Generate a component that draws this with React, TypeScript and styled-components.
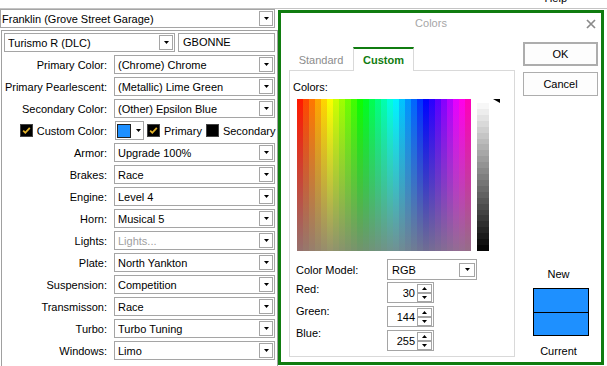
import React from 'react'
import styled, { createGlobalStyle } from 'styled-components'

const GREEN = '#107c10'
const EDGE = '#a5a5a5'

// banded spectrum like the win32 colour picker
const hueStops = Array.from({ length: 29 }, (_, i) => {
    const h = Math.round((i * 6 + 3) * 1.85)
    return `hsl(${h} 100% 50%) ${i * 6}px ${i * 6 + 6}px`
}).join(', ')

const lumStops = Array.from({ length: 25 }, (_, i) => {
    const v = Math.round(247 - i * 10)
    return `rgb(${v},${v},${v}) ${((i * 100) / 25).toFixed(2)}% ${(((i + 1) * 100) / 25).toFixed(2)}%`
}).join(', ')

const GlobalStyle = createGlobalStyle`
    html, body {
        margin: 0;
        padding: 0;
        background: #fff;
    }
    body {
        font-family: 'Liberation Sans', Arial, sans-serif;
        font-size: 11px;
        color: #000;
    }
`

const Screen = styled.div`
    width: 607px;
    height: 366px;
    overflow: hidden;
    background: #fff;
`

const MenuBar = styled.div`
    height: 8px;
    border-bottom: 1px solid #c4c4c4;
    display: flex;
    justify-content: flex-end;
    align-items: flex-end;
    overflow: hidden;
    padding-right: 40px;
`
const MenuItem = styled.span`
    line-height: 13px;
    margin-bottom: 3px;
`

const Workspace = styled.div`
    display: flex;
    align-items: flex-start;
`

const EditorColumn = styled.div`
    width: 278px;
    flex-shrink: 0;
`

const ComboBox = styled.div<{ $w: number; $h?: number; $pad?: number }>`
    display: flex;
    align-items: center;
    box-sizing: border-box;
    width: ${(p) => p.$w}px;
    height: ${(p) => p.$h ?? 19}px;
    border: 1px solid ${EDGE};
    background: #fff;
    padding-left: ${(p) => p.$pad ?? 3}px;
`
const ComboText = styled.span<{ $muted?: boolean }>`
    flex: 1;
    white-space: nowrap;
    overflow: hidden;
    color: ${(p) => (p.$muted ? '#a0a0a0' : '#000')};
`
const DropButton = styled.span<{ $w?: number; $h?: number }>`
    display: flex;
    align-items: center;
    justify-content: center;
    box-sizing: border-box;
    width: ${(p) => p.$w ?? 14}px;
    height: ${(p) => p.$h ?? 15}px;
    margin-right: 1px;
    border: 1px solid ${EDGE};
    background: #fff;
`

const GroupPanel = styled.div`
    margin: 2px 0 0 1px;
    width: 277px;
    height: 345px;
    box-sizing: border-box;
    border: 1px solid #a0a0a0;
    padding: 2px 0 0 2px;
`
const TopRow = styled.div`
    display: flex;
    gap: 3px;
`
const TextBox = styled.div`
    box-sizing: border-box;
    width: 97px;
    height: 19px;
    border: 1px solid ${EDGE};
    padding-left: 4px;
    line-height: 17px;
`
const FieldRow = styled.div`
    display: flex;
    align-items: center;
    height: 19px;
    margin-top: 3px;
`
const FieldLabel = styled.div`
    display: flex;
    justify-content: flex-end;
    align-items: center;
    gap: 4px;
    width: 103px;
    margin-right: 7px;
    white-space: nowrap;
`
const CheckSquare = styled.span`
    display: inline-flex;
    box-sizing: border-box;
    width: 13px;
    height: 13px;
    background: #000;
    border: 1px solid #444;
    flex-shrink: 0;
`
const ColorCombo = styled.div`
    display: flex;
    align-items: center;
    box-sizing: border-box;
    width: 29px;
    height: 19px;
    margin-left: 1px;
    border: 1px solid ${EDGE};
    padding-left: 1px;
    gap: 5px;
`
const ColorChip = styled.span<{ $color: string }>`
    box-sizing: border-box;
    width: 14px;
    height: 14px;
    border: 1px solid #222;
    background: ${(p) => p.$color};
`
const InlineOption = styled.label<{ $gap: number }>`
    display: flex;
    align-items: center;
    gap: 4px;
    margin-left: ${(p) => p.$gap}px;
    white-space: nowrap;
`

const Dialog = styled.div`
    margin-top: 1px;
    width: 326px;
    height: 355px;
    box-sizing: border-box;
    border: 3px solid ${GREEN};
    background: #fff;
    display: flex;
    flex-direction: column;
    flex-shrink: 0;
`
const TitleBar = styled.div`
    height: 29px;
    box-sizing: border-box;
    padding-top: 3px;
    display: flex;
    align-items: flex-start;
`
const Title = styled.div`
    flex: 1;
    text-align: center;
    line-height: 15px;
    color: #a6a6a6;
`
const CloseButton = styled.div`
    width: 20px;
    height: 15px;
    display: flex;
    align-items: center;
    justify-content: center;
`
const DialogBody = styled.div`
    display: flex;
    gap: 8px;
    padding: 0 3px 0 8px;
`
const TabColumn = styled.div`
    width: 226px;
    margin-top: 5px;
    display: flex;
    flex-direction: column;
`
const TabStrip = styled.div`
    display: flex;
    align-items: flex-end;
    height: 23px;
`
const Tab = styled.div<{ $active?: boolean }>`
    box-sizing: border-box;
    display: flex;
    align-items: center;
    justify-content: center;
    width: ${(p) => (p.$active ? 61 : 64)}px;
    height: ${(p) => (p.$active ? 24 : 23)}px;
    margin-bottom: ${(p) => (p.$active ? -1 : 0)}px;
    position: relative;
    z-index: ${(p) => (p.$active ? 1 : 0)};
    background: #fff;
    color: ${(p) => (p.$active ? GREEN : '#8c8c8c')};
    font-weight: ${(p) => (p.$active ? 'bold' : 'normal')};
    border: ${(p) => (p.$active ? '1px solid #d9d9d9' : 'none')};
    border-top: ${(p) => (p.$active ? `2px solid ${GREEN}` : 'none')};
    border-bottom: none;
    padding-top: ${(p) => (p.$active ? 0 : 3)}px;
`
const TabPanel = styled.div`
    box-sizing: border-box;
    height: 287px;
    border: 1px solid #d9d9d9;
    display: flex;
    flex-direction: column;
`
const PanelLabel = styled.div`
    margin: 9px 0 0 3px;
    line-height: 15px;
`
const PickerRow = styled.div`
    display: flex;
    align-items: flex-start;
    margin-top: 4px;
    padding-left: 7px;
`
const Spectrum = styled.div`
    width: 174px;
    height: 152px;
    background: linear-gradient(
            to bottom,
            rgba(128, 128, 128, 0) 0%,
            rgba(128, 128, 128, 0.45) 55%,
            rgba(132, 128, 128, 0.85) 100%
        ),
        linear-gradient(to right, ${hueStops});
`
const LumBar = styled.div`
    width: 12px;
    height: 148px;
    margin: 4px 0 0 6px;
    background: linear-gradient(to bottom, ${lumStops});
`
const LumArrow = styled.svg`
    margin-left: 4px;
`
const ModelRow = styled.div`
    display: flex;
    align-items: center;
    margin-top: 8px;
`
const RowLabel = styled.div`
    width: 97px;
    box-sizing: border-box;
    padding-left: 6px;
`
const SpinArea = styled.div`
    display: flex;
    align-items: flex-start;
    margin-top: 2px;
`
const SpinLabels = styled.div`
    width: 97px;
    box-sizing: border-box;
    padding-left: 6px;
    margin-top: -4px;
    display: flex;
    flex-direction: column;
`
const SpinLabel = styled.div`
    line-height: 22px;
`
const SpinColumn = styled.div`
    display: flex;
    flex-direction: column;
    gap: 3px;
`
const SpinBox = styled.div`
    box-sizing: border-box;
    width: 47px;
    height: 21px;
    border: 1px solid ${EDGE};
    display: flex;
    align-items: center;
`
const SpinValue = styled.span`
    flex: 1;
    text-align: right;
    padding-right: 2px;
`
const SpinButtons = styled.div`
    display: flex;
    flex-direction: column;
    width: 15px;
    margin-right: 1px;
`
const SpinButton = styled.span`
    box-sizing: border-box;
    height: 9px;
    border: 1px solid ${EDGE};
    display: flex;
    align-items: center;
    justify-content: center;
`
const ButtonColumn = styled.div`
    width: 75px;
    display: flex;
    flex-direction: column;
`
const DialogButton = styled.div<{ $default?: boolean }>`
    box-sizing: border-box;
    height: 24px;
    margin-top: ${(p) => (p.$default ? 0 : 6)}px;
    border: ${(p) => (p.$default ? 2 : 1)}px solid #adadad;
    background: #fdfdfd;
    display: flex;
    align-items: center;
    justify-content: center;
`
const PreviewLabel = styled.div<{ $top: number }>`
    margin-top: ${(p) => p.$top}px;
    line-height: 15px;
    text-align: center;
    padding-right: 4px;
`
const Swatch = styled.div`
    box-sizing: border-box;
    width: 56px;
    height: 48px;
    margin: 6px 0 0 10px;
    border: 1px solid #000;
    display: flex;
    flex-direction: column;
`
const SwatchHalf = styled.div<{ $color: string; $split?: boolean }>`
    flex: 1;
    background: ${(p) => p.$color};
    border-top: ${(p) => (p.$split ? '1px solid #000' : 'none')};
`

const Arrow = ({ up }: { up?: boolean }) => (
    <svg width="5" height="3" viewBox="0 0 5 3">
        <path d={up ? 'M0 3h5L2.5 0z' : 'M0 0h5L2.5 3z'} fill="#000" />
    </svg>
)

const Check = ({ checked }: { checked?: boolean }) => (
    <CheckSquare>
        {checked && (
            <svg width="11" height="11" viewBox="0 0 11 11">
                <polyline
                    points="2.2,5.6 4.3,7.8 8.8,2.8"
                    fill="none"
                    stroke="#e3b32a"
                    strokeWidth="1.8"
                />
            </svg>
        )}
    </CheckSquare>
)

const Combo = ({ text, w, muted }: { text: string; w: number; muted?: boolean }) => (
    <ComboBox $w={w}>
        <ComboText $muted={muted}>{text}</ComboText>
        <DropButton>
            <Arrow />
        </DropButton>
    </ComboBox>
)

const fields: [string, string, boolean?][] = [
    ['Armor:', 'Upgrade 100%'],
    ['Brakes:', 'Race'],
    ['Engine:', 'Level 4'],
    ['Horn:', 'Musical 5'],
    ['Lights:', 'Lights...', true],
    ['Plate:', 'North Yankton'],
    ['Suspension:', 'Competition'],
    ['Transmisson:', 'Race'],
    ['Turbo:', 'Turbo Tuning'],
    ['Windows:', 'Limo'],
]

const spins: [string, number][] = [
    ['Red:', 30],
    ['Green:', 144],
    ['Blue:', 255],
]

export default function App() {
    const custom = 'rgb(30, 144, 255)'
    return (
        <Screen>
            <GlobalStyle />
            <MenuBar>
                <MenuItem>Help</MenuItem>
            </MenuBar>
            <Workspace>
                <EditorColumn>
                    <ComboBox $w={275} $pad={1}>
                        <ComboText>Franklin (Grove Street Garage)</ComboText>
                        <DropButton>
                            <Arrow />
                        </DropButton>
                    </ComboBox>
                    <GroupPanel>
                        <TopRow>
                            <Combo text="Turismo R (DLC)" w={171} />
                            <TextBox>GBONNE</TextBox>
                        </TopRow>
                        <FieldRow>
                            <FieldLabel>Primary Color:</FieldLabel>
                            <Combo text="(Chrome) Chrome" w={161} />
                        </FieldRow>
                        <FieldRow>
                            <FieldLabel>Primary Pearlescent:</FieldLabel>
                            <Combo text="(Metallic) Lime Green" w={161} />
                        </FieldRow>
                        <FieldRow>
                            <FieldLabel>Secondary Color:</FieldLabel>
                            <Combo text="(Other) Epsilon Blue" w={161} />
                        </FieldRow>
                        <FieldRow>
                            <FieldLabel>
                                <Check checked />
                                Custom Color:
                            </FieldLabel>
                            <ColorCombo>
                                <ColorChip $color={custom} />
                                <Arrow />
                            </ColorCombo>
                            <InlineOption $gap={3}>
                                <Check checked />
                                Primary
                            </InlineOption>
                            <InlineOption $gap={4}>
                                <Check />
                                Secondary
                            </InlineOption>
                        </FieldRow>
                        {fields.map(([label, value, muted]) => (
                            <FieldRow key={label}>
                                <FieldLabel>{label}</FieldLabel>
                                <Combo text={value} w={161} muted={muted} />
                            </FieldRow>
                        ))}
                    </GroupPanel>
                </EditorColumn>

                <Dialog>
                    <TitleBar>
                        <Title>Colors</Title>
                        <CloseButton>
                            <svg width="10" height="10" viewBox="0 0 10 10">
                                <path
                                    d="M1 1L9 9M9 1L1 9"
                                    stroke="#8a8a8a"
                                    strokeWidth="1.7"
                                />
                            </svg>
                        </CloseButton>
                    </TitleBar>
                    <DialogBody>
                        <TabColumn>
                            <TabStrip>
                                <Tab>Standard</Tab>
                                <Tab $active>Custom</Tab>
                            </TabStrip>
                            <TabPanel>
                                <PanelLabel>Colors:</PanelLabel>
                                <PickerRow>
                                    <Spectrum />
                                    <LumBar />
                                    <LumArrow width="7" height="4" viewBox="0 0 7 4">
                                        <path d="M0 0H7V4z" fill="#000" />
                                    </LumArrow>
                                </PickerRow>
                                <ModelRow>
                                    <RowLabel>Color Model:</RowLabel>
                                    <ComboBox $w={90} $h={21} $pad={4}>
                                        <ComboText>RGB</ComboText>
                                        <DropButton $w={16} $h={14}>
                                            <Arrow />
                                        </DropButton>
                                    </ComboBox>
                                </ModelRow>
                                <SpinArea>
                                    <SpinLabels>
                                        {spins.map(([label]) => (
                                            <SpinLabel key={label}>{label}</SpinLabel>
                                        ))}
                                    </SpinLabels>
                                    <SpinColumn>
                                        {spins.map(([label, value]) => (
                                            <SpinBox key={label}>
                                                <SpinValue>{value}</SpinValue>
                                                <SpinButtons>
                                                    <SpinButton>
                                                        <Arrow up />
                                                    </SpinButton>
                                                    <SpinButton>
                                                        <Arrow />
                                                    </SpinButton>
                                                </SpinButtons>
                                            </SpinBox>
                                        ))}
                                    </SpinColumn>
                                </SpinArea>
                            </TabPanel>
                        </TabColumn>
                        <ButtonColumn>
                            <DialogButton $default>OK</DialogButton>
                            <DialogButton>Cancel</DialogButton>
                            <PreviewLabel $top={171}>New</PreviewLabel>
                            <Swatch>
                                <SwatchHalf $color={custom} />
                                <SwatchHalf $color={custom} $split />
                            </Swatch>
                            <PreviewLabel $top={8}>Current</PreviewLabel>
                        </ButtonColumn>
                    </DialogBody>
                </Dialog>
            </Workspace>
        </Screen>
    )
}
